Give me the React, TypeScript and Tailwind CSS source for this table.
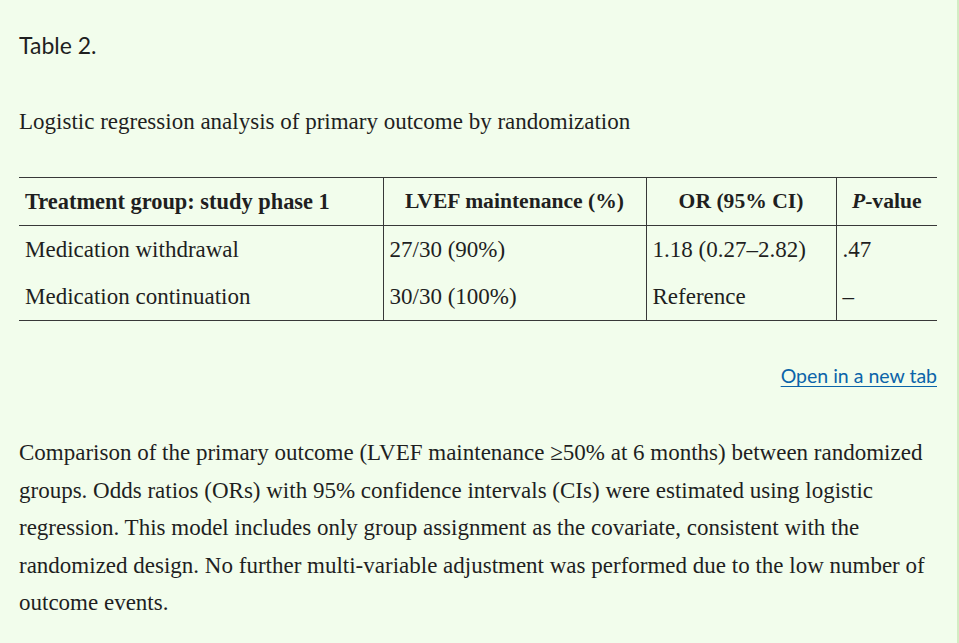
export default function App() {
  const serif = "font-['Liberation_Serif',serif]";
  const sans = "font-['Lato','Open_Sans',sans-serif]";

  return (
    <div className="min-h-[643px] bg-[#f2fdec] border-r-2 border-[#d3ecc3] pl-[19px] pr-[20px] pt-[29px] pb-[20px] text-[#1f1f1f]">
      {/* Label */}
      <p className={`${sans} text-[23px] leading-[32px]`}>Table 2.</p>

      {/* Caption */}
      <p className={`${serif} text-[23px] leading-[37px] mt-[42px]`}>
        Logistic regression analysis of primary outcome by randomization
      </p>

      {/* Table */}
      <table
        className={`${serif} mt-[37px] w-full border-collapse text-[23px] border-t border-b border-[#383838]`}
      >
        <thead className="text-[21.6px]">
          <tr className="border-b border-[#383838]">
            <th className="w-[364px] text-left text-[22.4px] font-bold px-[6px] py-[5px] leading-[37px]">
              Treatment group: study phase 1
            </th>
            <th className="w-[263px] text-center font-bold px-[6px] py-[5px] leading-[37px] border-l border-[#383838]">
              LVEF maintenance (%)
            </th>
            <th className="w-[190px] text-center font-bold px-[6px] py-[5px] leading-[37px] border-l border-[#383838]">
              OR (95% CI)
            </th>
            <th className="text-center font-bold px-[6px] py-[5px] leading-[37px] border-l border-[#383838]">
              <i>P</i>-value
            </th>
          </tr>
        </thead>
        <tbody>
          <tr>
            <td className="px-[6px] py-[5px] leading-[37px]">Medication withdrawal</td>
            <td className="px-[6px] py-[5px] leading-[37px] border-l border-[#383838]">27/30 (90%)</td>
            <td className="px-[6px] py-[5px] leading-[37px] border-l border-[#383838]">1.18 (0.27–2.82)</td>
            <td className="px-[6px] py-[5px] leading-[37px] border-l border-[#383838]">.47</td>
          </tr>
          <tr>
            <td className="px-[6px] py-[5px] leading-[37px]">Medication continuation</td>
            <td className="px-[6px] py-[5px] leading-[37px] border-l border-[#383838]">30/30 (100%)</td>
            <td className="px-[6px] py-[5px] leading-[37px] border-l border-[#383838]">Reference</td>
            <td className="px-[6px] py-[5px] leading-[37px] border-l border-[#383838]">–</td>
          </tr>
        </tbody>
      </table>

      {/* Link */}
      <div className="flex justify-end mt-[40px]">
        <a
          href="#"
          className={`${sans} text-[19.5px] leading-[30px] text-[#0b64a9] underline underline-offset-[3px]`}
        >
          Open in a new tab
        </a>
      </div>

      {/* Footnote */}
      <p className={`${serif} text-[23px] leading-[37.5px] mt-[43px]`}>
        Comparison of the primary outcome (LVEF maintenance ≥50% at 6 months) between randomized
        groups. Odds ratios (ORs) with 95% confidence intervals (CIs) were estimated using logistic
        regression. This model includes only group assignment as the covariate, consistent with the
        randomized design. No further multi-variable adjustment was performed due to the low number of
        outcome events.
      </p>
    </div>
  );
}
